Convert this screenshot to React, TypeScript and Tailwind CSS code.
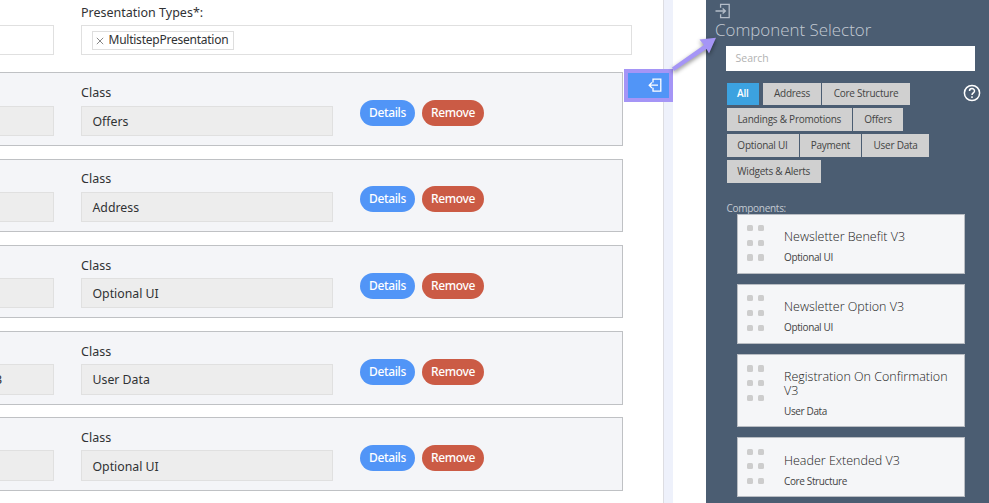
import React from "react";

const rows = [
  { left: "", name: "Offers", box: "h-[74px] mb-[13px]", leftBox: "mt-[33px] h-[30px]", label: "mt-[10px] h-[23px]", field: "h-[30px] pt-[2px]", actions: "mt-[27px]" },
  { left: "", name: "Address", box: "h-[73px] mb-[13px]", leftBox: "mt-[32px] h-[30px]", label: "mt-[9px] h-[23px]", field: "h-[30px] pt-[2px]", actions: "mt-[26px]" },
  { left: "", name: "Optional UI", box: "h-[73px] mb-[13px]", leftBox: "mt-[32px] h-[30px]", label: "mt-[10px] h-[22px]", field: "h-[30px] pt-[2px]", actions: "mt-[27px]" },
  { left: "3", name: "User Data", box: "h-[74px] mb-[12px]", leftBox: "mt-[32px] h-[31px]", label: "mt-[10px] h-[22px]", field: "h-[31px] pt-px", actions: "mt-[27px]" },
  { left: "", name: "Optional UI", box: "h-[74px]", leftBox: "mt-[32px] h-[31px]", label: "mt-[10px] h-[22px]", field: "h-[31px] pt-[3px]", actions: "mt-[27px]" },
];

function Row({ left, name, box, leftBox, label, field, actions }: (typeof rows)[number]) {
  return (
    <div className={"flex w-[623px] shrink-0 border border-l-0 border-[#bfc1c4] bg-[#f4f5f8] " + box}>
      <div className={"flex w-[54px] items-center overflow-hidden border border-l-0 border-[#e0e0e0] bg-[#ededed] " + leftBox}>
        <span className="-ml-[5px] pt-px">{left}</span>
      </div>
      <div className="ml-[27px] w-[252px]">
        <div className={"leading-5 " + label}>Class</div>
        <div className={"flex items-center border border-[#e0e0e0] bg-[#ededed] pl-[10.5px] text-[12.3px] " + field}>{name}</div>
      </div>
      <div className={"ml-[27px] flex gap-[7px] text-[12px] font-medium tracking-[-0.35px] text-white " + actions}>
        <div className="flex h-[26px] w-[55px] items-center justify-center rounded-full bg-[#5195f7]">Details</div>
        <div className="flex h-[26px] w-[62px] items-center justify-center rounded-full bg-[#cb5b45]">Remove</div>
      </div>
    </div>
  );
}

function Chip({ w, active, children }: { w: string; active?: boolean; children: React.ReactNode }) {
  return (
    <div
      className={
        "flex h-[22.5px] items-center justify-center whitespace-nowrap " +
        w +
        (active ? " bg-[#3ca2e0] font-semibold text-white" : " bg-[#d0d0d0] text-[#444]")
      }
    >
      {children}
    </div>
  );
}

function Card({ title, kind, h }: { title: React.ReactNode; kind: string; h: string }) {
  return (
    <div className={"flex w-[228px] shrink-0 border border-[#b9bdc3] bg-[#f5f6f8] " + h}>
      <div className="ml-[9px] mt-[10.3px] grid h-[38px] w-[18px] grid-cols-2 content-start gap-x-[4px] gap-y-[8.5px]">
        {[0, 1, 2, 3, 4, 5].map((i) => (
          <div key={i} className="h-[6.2px] w-[6.2px] rounded-[1.5px] bg-[#cdcdcd]" />
        ))}
      </div>
      <div className="ml-[19px] mt-[15.4px] text-[#444]">
        <div className="whitespace-nowrap text-[12.5px] font-light leading-[14px] text-[#222]">{title}</div>
        <div className="mt-[6px] text-[10px] leading-[14px] tracking-[-0.37px]">{kind}</div>
      </div>
    </div>
  );
}

export default function App() {
  return (
    <div className="relative flex h-[503px] w-[989px] overflow-hidden bg-white">
      <main className="flex h-full w-[664px] shrink-0 flex-col border-r border-[#dddde2] font-['Noto_Sans',sans-serif] text-[12.5px] text-[#303234]">
        <div className="flex h-[72px] shrink-0">
          <div className="mt-[25px] h-[30px] w-[54px] border border-l-0 border-[#e0e0e0]" />
          <div className="ml-[27px] w-[551px]">
            <div className="h-[25px] pt-[3px] leading-5">Presentation Types*:</div>
            <div className="flex h-[30px] items-center border border-[#e0e0e0] pl-[10px]">
              <div className="flex h-[19px] w-[142px] items-center border border-[#dedede] pl-[3px] text-[12px] tracking-[-0.24px]">
                <svg width="8" height="8" viewBox="0 0 8 8" className="mt-[2px] mr-[4.5px] shrink-0" stroke="#888" strokeWidth="1">
                  <path d="M.8 .8 7.2 7.2M7.2 .8 .8 7.2" />
                </svg>
                MultistepPresentation
              </div>
            </div>
          </div>
        </div>
        {rows.map((r, i) => (
          <Row key={i} {...r} />
        ))}
      </main>
      <div className="w-[9px] shrink-0 bg-[#eef1fb]" />
      <div className="w-[33px] shrink-0" />
      <aside className="h-full w-[283px] shrink-0 bg-[#4b5d72] font-['Open_Sans',sans-serif]">
        <svg width="17" height="17" viewBox="0 0 17 17" className="ml-[9px] mt-[3px] block" fill="none" stroke="#b4bdc9" strokeWidth="1.3">
          <path d="M5.6 4.8V1.4H14.2V14.6H5.6V11.2M.5 8H10.2M7.6 5.4 10.4 8 7.6 10.6" />
        </svg>
        <h1 className="ml-[9px] -mt-px h-[27px] text-[16.9px] font-light leading-[22px] text-[#c3cad3]">Component Selector</h1>
        <div className="ml-[20px] flex h-[25px] w-[249px] items-center bg-white pl-[9.5px] pt-px text-[10.5px] text-[#b2b2b2]">Search</div>
        <div className="ml-[20.5px] mt-[11.5px] flex text-[10px] tracking-[-0.24px]">
          <div className="flex w-[236px] flex-col gap-[3.4px]">
            <div className="flex">
              <Chip w="w-[32.5px]" active>All</Chip>
              <div className="w-[4px]" />
              <Chip w="w-[58px]">Address</Chip>
              <div className="w-px" />
              <Chip w="w-[88px]">Core Structure</Chip>
            </div>
            <div className="flex gap-px">
              <Chip w="w-[125.5px]">Landings &amp; Promotions</Chip>
              <Chip w="w-[50px]">Offers</Chip>
            </div>
            <div className="flex gap-[1.2px]">
              <Chip w="w-[72px]">Optional UI</Chip>
              <Chip w="w-[61.5px]">Payment</Chip>
              <Chip w="w-[66.5px]">User Data</Chip>
            </div>
            <Chip w="w-[94.5px]">Widgets &amp; Alerts</Chip>
          </div>
          <svg width="18" height="18" viewBox="0 0 18 18" className="mt-px shrink-0" fill="none" stroke="#fff" strokeWidth="1.5">
            <circle cx="9" cy="9" r="7.6" />
            <path d="M6.5 7.1C6.5 3.8 11.5 3.8 11.5 7C11.5 8.9 9 9 9 11M9 12.3V13.9" />
          </svg>
        </div>
        <div className="ml-[20.5px] mt-[18.6px] h-[12.4px] text-[10px] leading-[14px] tracking-[-0.28px] text-[#c3cad3]">Components:</div>
        <div className="ml-[31px] flex flex-col gap-[10.2px]">
          <Card title="Newsletter Benefit V3" kind="Optional UI" h="h-[60px]" />
          <Card title="Newsletter Option V3" kind="Optional UI" h="h-[60px]" />
          <Card title={<>Registration On Confirmation<br />V3</>} kind="User Data" h="h-[73px]" />
          <Card title="Header Extended V3" kind="Core Structure" h="h-[60px]" />
        </div>
      </aside>

      <div className="absolute left-[624px] top-[69px] flex h-[33px] w-[49px] items-center border-4 border-[#a595f6] bg-[#5195f7]">
        <svg width="15" height="15" viewBox="0 0 15 15" className="ml-[20px]" fill="none" stroke="#fff" strokeWidth="1.3">
          <path d="M5 4.5V1.2H12.8V13.2H5V9.8M10 7.2H1.2M4 4.4 1.2 7.2 4 10" />
        </svg>
      </div>
      <svg className="absolute left-[664px] top-[30px] drop-shadow-[0_2px_2px_rgba(0,0,0,0.45)]" width="60" height="46" viewBox="0 0 60 46">
        <path d="M8 37.5 40 15 35.5 9.5 52 7.8 45 23.5 42.5 19 10 41Z" fill="#a595f6" />
      </svg>
    </div>
  );
}
